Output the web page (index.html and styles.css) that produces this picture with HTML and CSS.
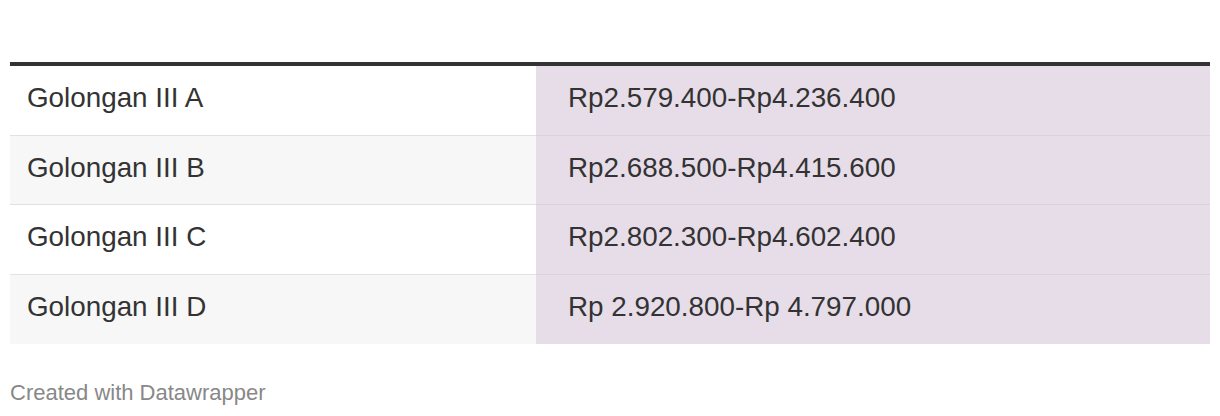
FILE: index.html
```html
<!DOCTYPE html>
<html>
<head>
<meta charset="utf-8">
<link rel="stylesheet" href="styles.css">
</head>
<body>
<div class="chart">
  <table class="tbl">
    <tbody>
      <tr class="row"><td class="c-name">Golongan III A</td><td class="c-val">Rp2.579.400-Rp4.236.400</td></tr>
      <tr class="row alt"><td class="c-name">Golongan III B</td><td class="c-val">Rp2.688.500-Rp4.415.600</td></tr>
      <tr class="row"><td class="c-name">Golongan III C</td><td class="c-val">Rp2.802.300-Rp4.602.400</td></tr>
      <tr class="row alt last"><td class="c-name">Golongan III D</td><td class="c-val">Rp 2.920.800-Rp 4.797.000</td></tr>
    </tbody>
  </table>
  <div class="footer">Created with Datawrapper</div>
</div>
</body>
</html>
```

FILE: styles.css
```css
html, body {
  margin: 0;
  padding: 0;
  background: #fff;
}
.chart {
  padding: 62px 10px 0 10px;
  font-family: "Liberation Sans", Arial, sans-serif;
  color: #333;
}
.tbl {
  width: 1200px;
  table-layout: fixed;
  border-collapse: separate;
  border-spacing: 0;
  border-top: 4px solid #333;
}
.row td {
  box-sizing: border-box;
  height: 69.5px;
  padding: 0 0 4px 0;
  font-size: 27.8px;
  line-height: 32px;
  border-bottom: 1px solid #e2e2e2;
  vertical-align: middle;
}
.row.last td {
  border-bottom: none;
}
.row.alt .c-name {
  background: #f7f7f7;
}
.c-name {
  width: 526px;
  padding-left: 17px !important;
}
.c-val {
  background: #e7dde9;
  padding-left: 32px !important;
  border-bottom-color: #dbd0dd !important;
}
.footer {
  margin-top: 36px;
  font-size: 22px;
  color: #888;
}
```
